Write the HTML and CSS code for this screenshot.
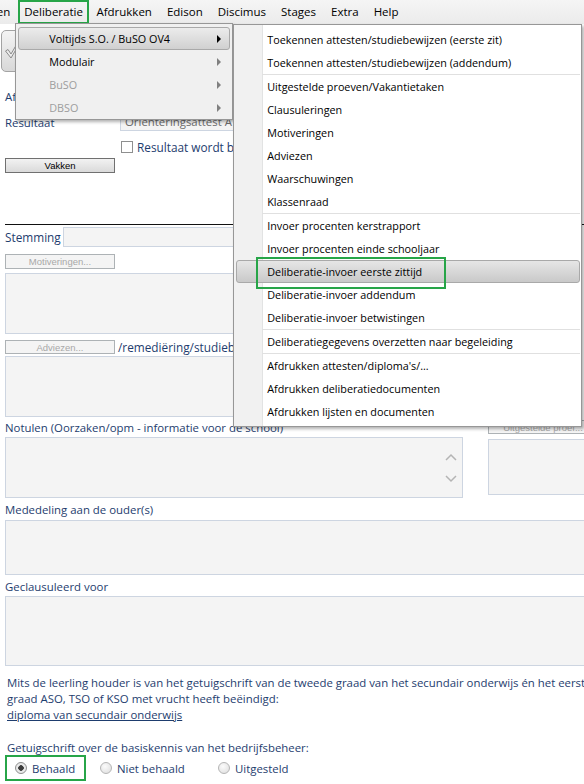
FILE: index.html
```html
<!DOCTYPE html>
<html lang="nl">
  <head>
    <meta charset="utf-8">
    <title>Deliberatie</title>
    <link rel="stylesheet" href="styles.css">
  </head>
  <body>

    <!-- Menubalk met open menu Deliberatie -->
    <nav class="menubar">
      <div class="menubar__item menubar__item--first">Leerlingen</div>
      <div class="menubar__item menubar__item--open is-marked">Deliberatie
        <div class="menu">
          <div class="menu__item is-hover">Voltijds S.O. / BuSO OV4<span class="menu__arrow"></span>
            <div class="menu menu--sub">
              <div class="menu__item">Toekennen attesten/studiebewijzen (eerste zit)</div>
              <div class="menu__item">Toekennen attesten/studiebewijzen (addendum)</div>
              <div class="menu__sep"></div>
              <div class="menu__item">Uitgestelde proeven/Vakantietaken</div>
              <div class="menu__item">Clausuleringen</div>
              <div class="menu__item">Motiveringen</div>
              <div class="menu__item">Adviezen</div>
              <div class="menu__item">Waarschuwingen</div>
              <div class="menu__item">Klassenraad</div>
              <div class="menu__sep"></div>
              <div class="menu__item">Invoer procenten kerstrapport</div>
              <div class="menu__item">Invoer procenten einde schooljaar</div>
              <div class="menu__item is-hover is-marked">Deliberatie-invoer eerste zittijd</div>
              <div class="menu__item">Deliberatie-invoer addendum</div>
              <div class="menu__item">Deliberatie-invoer betwistingen</div>
              <div class="menu__sep"></div>
              <div class="menu__item">Deliberatiegegevens overzetten naar begeleiding</div>
              <div class="menu__sep"></div>
              <div class="menu__item">Afdrukken attesten/diploma's/...</div>
              <div class="menu__item">Afdrukken deliberatiedocumenten</div>
              <div class="menu__item">Afdrukken lijsten en documenten</div>
            </div>
          </div>
          <div class="menu__item">Modulair<span class="menu__arrow"></span></div>
          <div class="menu__item is-disabled">BuSO<span class="menu__arrow"></span></div>
          <div class="menu__item is-disabled">DBSO<span class="menu__arrow"></span></div>
        </div>
      </div>
      <div class="menubar__item">Afdrukken</div>
      <div class="menubar__item">Edison</div>
      <div class="menubar__item">Discimus</div>
      <div class="menubar__item">Stages</div>
      <div class="menubar__item">Extra</div>
      <div class="menubar__item">Help</div>
    </nav>

    <!-- Werkbalk -->
    <div class="toolbar">
      <button class="tool-btn" title="Opslaan">
        <svg width="14" height="16" viewBox="0 0 14 16">
          <polygon points="0.5,8 3,6.5 6,11 12,0.8 13.5,2.2 6,15" fill="#ececec" stroke="#8a8a8a" stroke-width="1" stroke-linejoin="round"/>
        </svg>
      </button>
    </div>

    <!-- Deliberatiefiche -->
    <div class="sheet">
      <div class="row row--af">Afdeling</div>

      <div class="row row--result">
        <span class="row__label">Resultaat</span>
        <div class="box box--line box--result">Oriënteringsattest A</div>
      </div>

      <div class="check"><span class="check__box"></span>Resultaat wordt bekrachtigd</div>

      <button class="btn btn--main">Vakken</button>

      <div class="rule"></div>

      <div class="row row--stem">
        <span class="row__label row__label--stem">Stemming</span>
        <div class="box box--line box--stem"></div>
      </div>

      <button class="btn btn--motiv" disabled>Motiveringen...</button>
      <div class="box box--area box--motiv"></div>

      <div class="row row--adv">
        <button class="btn btn--adv" disabled>Adviezen...</button>
        <span>/remediëring/studiebegeleiding</span>
      </div>
      <div class="box box--area box--adv"></div>

      <div class="notes">
        <div class="notes__label">Notulen (Oorzaken/opm - informatie voor de school)</div>
        <button class="btn btn--side" disabled>Uitgestelde proef...</button>
        <div class="box box--notes">
          <svg class="scroll" width="12" height="30" viewBox="0 0 12 30">
            <polyline points="1,7 6,2 11,7" fill="none" stroke="#b4b4b4" stroke-width="1.5"/>
            <polyline points="1,23 6,28 11,23" fill="none" stroke="#b4b4b4" stroke-width="1.5"/>
          </svg>
        </div>
        <div class="box box--side"></div>
      </div>

      <div class="caption caption--ouder">Mededeling aan de ouder(s)</div>
      <div class="box box--wide box--ouder"></div>

      <div class="caption caption--claus">Geclausuleerd voor</div>
      <div class="box box--wide box--claus"></div>

      <p class="info">
        <span class="info__line">Mits de leerling houder is van het getuigschrift van de tweede graad van het secundair onderwijs én het eerste leerjaar van de derde</span><br>
        graad ASO, TSO of KSO met vrucht heeft beëindigd:<br>
        <a class="info__link" href="#">diploma van secundair onderwijs</a>
      </p>

      <div class="caption caption--beheer">Getuigschrift over de basiskennis van het bedrijfsbeheer:</div>
      <div class="radios">
        <span class="radio radio--first is-checked"><span class="radio__dot"></span>Behaald</span>
        <span class="radio radio--second"><span class="radio__dot"></span>Niet behaald</span>
        <span class="radio"><span class="radio__dot"></span>Uitgesteld</span>
      </div>
    </div>

  </body>
</html>
```

FILE: styles.css
```css
* { box-sizing: border-box; }

html, body {
  margin: 0;
  height: 100%;
  overflow: hidden;
}

body {
  background: #fff;
  color: #1e3d6e;
  font-family: "Open Sans", "Noto Sans", sans-serif;
  font-size: 11.4px;
}

/* ---- menubalk ---- */

.menubar {
  position: relative;
  z-index: 10;
  display: flex;
  height: 24px;
  background: linear-gradient(#f5f5f5, #ebebeb);
  color: #000;
  font-size: 11.5px;
}

.menubar__item {
  position: relative;
  padding: 0 7.5px;
  line-height: 24px;
  white-space: nowrap;
}

.menubar__item--first {
  margin-left: -46px;
  padding: 0 8px 0 0;
}

.menubar__item--open { padding: 0 6px; }

.menubar__item.is-marked { box-shadow: inset 0 0 0 2px #27a548; }

/* ---- uitklapmenu ---- */

.menu {
  position: absolute;
  top: 23px;
  left: -3px;
  width: 218px;
  padding: 3px 2px 0;
  background: #f0f0f0;
  border: 1px solid #979797;
  box-shadow: 2px 2px 3px rgba(0, 0, 0, .3);
  font-size: 10.8px;
  line-height: 21px;
}

.menu__item {
  position: relative;
  height: 23px;
  padding-left: 30px;
  border: 1px solid transparent;
  border-radius: 3px;
  color: #000;
  white-space: nowrap;
}

.menu__item.is-hover {
  background: linear-gradient(#ececec, #d0d0d0);
  border-color: #a9a9a9;
}

.menu__item.is-disabled { color: #9d9d9d; }

.menu__arrow {
  position: absolute;
  right: 8px;
  top: 7px;
  border-left: 4px solid #808080;
  border-top: 4px solid transparent;
  border-bottom: 4px solid transparent;
}

.is-hover > .menu__arrow { border-left-color: #000; }

.menu--sub {
  top: -4px;
  left: 214px;
  width: 349px;
  padding: 3px 1px 3px 2px;
  background: linear-gradient(to right, #f1f1f1 0 28px, #e2e3e3 28px 29px, #fff 29px);
}

.menu--sub .menu__item.is-hover { background: linear-gradient(#e6e6e6, #c9c9c9); }

.menu__item.is-marked::after {
  content: "";
  position: absolute;
  left: 19px;
  top: -4px;
  width: 186px;
  height: 28px;
  border: 2px solid #27a548;
}

.menu__sep {
  height: 1px;
  margin-left: 26px;
  background: #e0e0e0;
}

/* ---- werkbalk ---- */

.toolbar {
  height: 52px;
  padding: 6px 0 0 1px;
}

.tool-btn {
  display: flex;
  align-items: center;
  width: 44px;
  height: 42px;
  padding: 0 0 0 3px;
  border: 1px solid #a3a3a3;
  border-radius: 5px;
  background: linear-gradient(#f4f4f4, #d8d8d8);
}

/* ---- fiche ---- */

.sheet {
  width: 660px;
  padding-left: 5px;
}

.row {
  display: flex;
  align-items: center;
}

.row--af {
  height: 16px;
  margin-top: 12px;
}

.row--result {
  height: 18px;
  margin-top: 9px;
}

.row__label { width: 115px; }

.box {
  background: #f4f4f4;
  border: 1px solid #cdd5e1;
}

.box--line {
  height: 100%;
  padding-left: 4px;
  color: #6a6a6a;
  line-height: 16px;
}

.box--result { width: 240px; }

.check {
  display: flex;
  align-items: center;
  height: 12px;
  margin-top: 10px;
  padding-left: 116px;
  font-size: 11.8px;
}

.check__box {
  width: 12px;
  height: 12px;
  margin-right: 4px;
  border: 1px solid #8e8f8f;
  background: #fff;
}

.btn {
  display: block;
  width: 110px;
  height: 15px;
  padding: 0;
  border: 1px solid #707070;
  background: linear-gradient(#f2f2f2, #dadada);
  color: #000;
  font-family: "Liberation Sans", sans-serif;
  font-size: 9.5px;
  line-height: 13px;
}

.btn:disabled {
  border-color: #adb2b5;
  background: #f4f4f4;
  color: #a8a8a8;
}

.btn--main { margin-top: 5px; }

.rule {
  height: 1px;
  margin-top: 51px;
  background: #111;
}

.row--stem {
  height: 20px;
  margin-top: 2px;
}

.row__label--stem { width: 58px; font-size: 11.8px; }

.box--stem { width: 400px; }

.btn--motiv { margin-top: 7px; }

.box--area { width: 458px; height: 61px; }

.box--motiv { margin-top: 4px; }

.row--adv {
  height: 14px;
  margin-top: 6px;
  font-size: 11.8px;
}

.btn--adv {
  height: 14px;
  margin-right: 3px;
}

.box--adv { margin-top: 2px; }

/* notulen met zijvak */
.notes {
  display: grid;
  grid-template-columns: 458px 110px;
  grid-template-rows: 17px 61px;
  column-gap: 25px;
  margin-top: 3px;
}

.notes__label { line-height: 16px; }

.btn--side { height: 14px; }

.box--notes {
  display: flex;
  justify-content: flex-end;
  align-items: center;
  padding-right: 5px;
}

.box--side {
  height: 56px;
  margin-top: 2px;
}

.caption {
  height: 16px;
  line-height: 16px;
}

.caption--ouder { margin-top: 4px; }
.caption--claus { margin-top: 4px; }

.box--wide { width: 640px; }

.box--ouder { height: 55px; margin-top: 2px; }
.box--claus { height: 70px; margin-top: 1px; }

.info {
  margin: 9px 0 0 2px;
  line-height: 16px;
  white-space: nowrap;
}

.info__link { color: inherit; }

.caption--beheer {
  height: 14px;
  line-height: 14px;
  margin: 18px 0 0 2px;
}

.radios {
  display: flex;
  align-items: center;
  height: 26px;
}

.radio {
  display: flex;
  align-items: center;
  height: 26px;
  padding-left: 16px;
}

.radio--first {
  width: 81px;
  padding-left: 8px;
  border: 2px solid #27a548;
}

.radio--second { width: 116px; padding-left: 14px; }

.radio__dot {
  width: 12px;
  height: 12px;
  margin-right: 5px;
  border: 1px solid #b5b5b5;
  border-radius: 50%;
  background: radial-gradient(circle at 40% 35%, #fbfbfb, #dcdcdc);
}

.is-checked .radio__dot {
  border-color: #8e8f8f;
  background: radial-gradient(circle, #3c3c3c 0 2.5px, #e9e9e9 3px);
}
```
